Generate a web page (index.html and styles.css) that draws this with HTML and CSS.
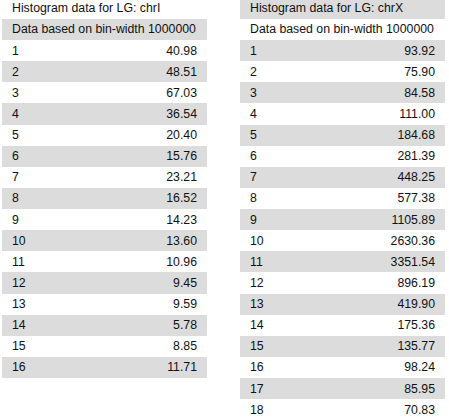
FILE: index.html
```html
<!DOCTYPE html>
<html>
<head>
<meta charset="utf-8">
<link rel="stylesheet" href="styles.css">
</head>
<body>
<div class="page">
  <table class="hist">
    <tr class="plain"><td colspan="2">Histogram data for LG: chrI</td></tr>
    <tr class="shade"><td colspan="2">Data based on bin-width 1000000</td></tr>
    <tr class="plain"><td>1</td><td class="num">40.98</td></tr>
    <tr class="shade"><td>2</td><td class="num">48.51</td></tr>
    <tr class="plain"><td>3</td><td class="num">67.03</td></tr>
    <tr class="shade"><td>4</td><td class="num">36.54</td></tr>
    <tr class="plain"><td>5</td><td class="num">20.40</td></tr>
    <tr class="shade"><td>6</td><td class="num">15.76</td></tr>
    <tr class="plain"><td>7</td><td class="num">23.21</td></tr>
    <tr class="shade"><td>8</td><td class="num">16.52</td></tr>
    <tr class="plain"><td>9</td><td class="num">14.23</td></tr>
    <tr class="shade"><td>10</td><td class="num">13.60</td></tr>
    <tr class="plain"><td>11</td><td class="num">10.96</td></tr>
    <tr class="shade"><td>12</td><td class="num">9.45</td></tr>
    <tr class="plain"><td>13</td><td class="num">9.59</td></tr>
    <tr class="shade"><td>14</td><td class="num">5.78</td></tr>
    <tr class="plain"><td>15</td><td class="num">8.85</td></tr>
    <tr class="shade"><td>16</td><td class="num">11.71</td></tr>
  </table>
  <table class="hist">
    <tr class="shade"><td colspan="2">Histogram data for LG: chrX</td></tr>
    <tr class="plain"><td colspan="2">Data based on bin-width 1000000</td></tr>
    <tr class="shade"><td>1</td><td class="num">93.92</td></tr>
    <tr class="plain"><td>2</td><td class="num">75.90</td></tr>
    <tr class="shade"><td>3</td><td class="num">84.58</td></tr>
    <tr class="plain"><td>4</td><td class="num">111.00</td></tr>
    <tr class="shade"><td>5</td><td class="num">184.68</td></tr>
    <tr class="plain"><td>6</td><td class="num">281.39</td></tr>
    <tr class="shade"><td>7</td><td class="num">448.25</td></tr>
    <tr class="plain"><td>8</td><td class="num">577.38</td></tr>
    <tr class="shade"><td>9</td><td class="num">1105.89</td></tr>
    <tr class="plain"><td>10</td><td class="num">2630.36</td></tr>
    <tr class="shade"><td>11</td><td class="num">3351.54</td></tr>
    <tr class="plain"><td>12</td><td class="num">896.19</td></tr>
    <tr class="shade"><td>13</td><td class="num">419.90</td></tr>
    <tr class="plain"><td>14</td><td class="num">175.36</td></tr>
    <tr class="shade"><td>15</td><td class="num">135.77</td></tr>
    <tr class="plain"><td>16</td><td class="num">98.24</td></tr>
    <tr class="shade"><td>17</td><td class="num">85.95</td></tr>
    <tr class="plain"><td>18</td><td class="num">70.83</td></tr>
  </table>
</div>
</body>
</html>
```

FILE: styles.css
```css
html, body {
  margin: 0;
  padding: 0;
  background: #fff;
  overflow: hidden;
}
.page {
  display: flex;
  align-items: flex-start;
  gap: 33px;
  margin-top: -2.25px;
  padding-left: 2px;
  font-family: "Liberation Sans", Arial, sans-serif;
  font-size: 12.3px;
  color: #111;
}
.hist {
  width: 205px;
  border-collapse: collapse;
  border-spacing: 0;
}
.hist tr {
  height: 21.125px;
}
.hist td {
  padding: 0 10px;
  height: 21.125px;
  box-sizing: border-box;
  vertical-align: middle;
  white-space: nowrap;
  line-height: 14px;
}
.hist .num {
  text-align: right;
}
.shade {
  background: #dcdcdc;
}
.plain {
  background: #fff;
}
```
